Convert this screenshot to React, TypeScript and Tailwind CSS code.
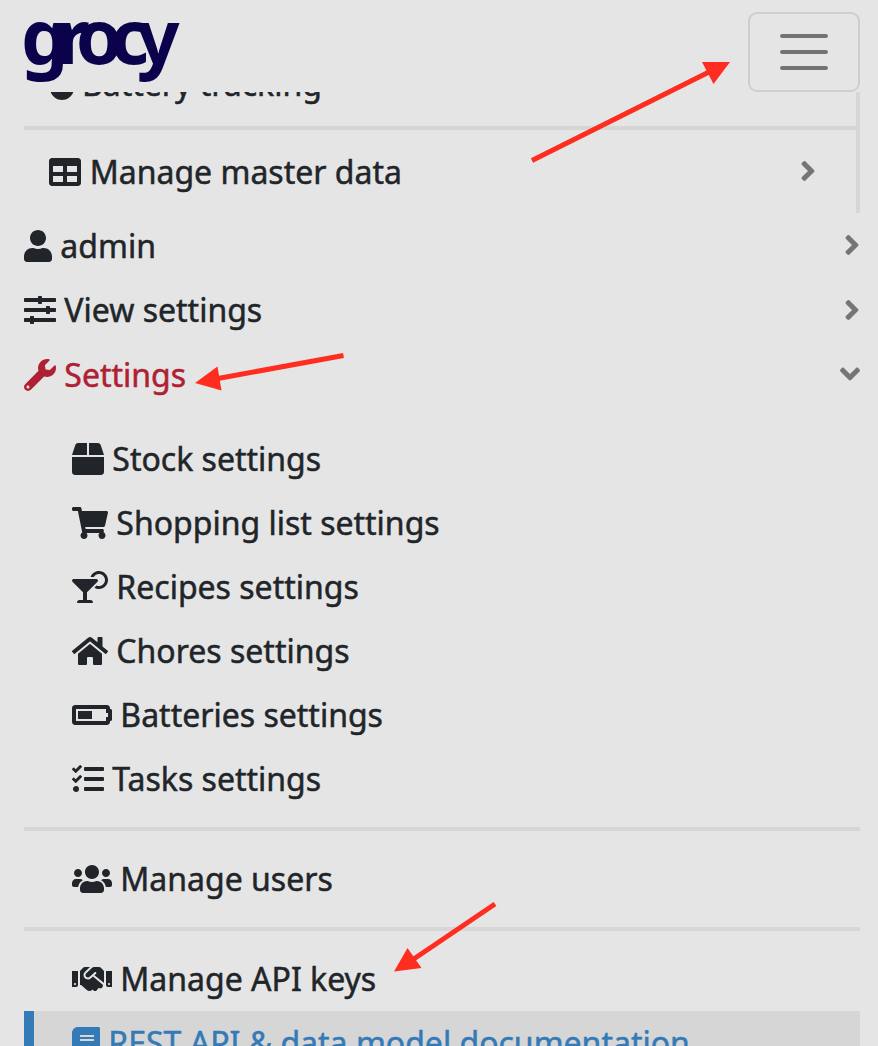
import type { ReactNode } from "react";
import type { IconType } from "react-icons";
import {
  FaAngleDown,
  FaAngleRight,
  FaBatteryHalf,
  FaBook,
  FaBox,
  FaCocktail,
  FaFire,
  FaHandshake,
  FaHome,
  FaShoppingCart,
  FaSlidersH,
  FaTable,
  FaTasks,
  FaUser,
  FaUsers,
  FaWrench,
} from "react-icons/fa";

type RowProps = {
  icon: IconType;
  iconWidth?: string;
  children: ReactNode;
  className?: string;
  chevron?: ReactNode;
};

function Row({ icon: Icon, iconWidth = "w-8", children, className = "", chevron }: RowProps) {
  return (
    <div className={`flex h-16 shrink-0 justify-between whitespace-nowrap leading-[64px] ${className}`}>
      <div>
        <Icon className={`inline-block h-8 align-[-4px] ${iconWidth}`} /> {children}
      </div>
      {chevron}
    </div>
  );
}

function Right({ className = "mt-[15px]" }: { className?: string }) {
  return <FaAngleRight className={`h-8 w-4 text-[#757575] ${className}`} />;
}

function Divider({ className = "" }: { className?: string }) {
  return <div className={`h-1 shrink-0 bg-[#d6d6d6] ${className}`} />;
}

function Arrows() {
  return (
    <svg className="pointer-events-none absolute inset-0" width="878" height="1046" viewBox="0 0 878 1046" fill="#ff2d1f" stroke="#ff2d1f">
      <path d="M532 160.5L710 71.5M343.5 355.5L218 378.5M495 904L413 959.5" strokeWidth="5" fill="none" />
      <path d="M730 62L702 62L713.5 84ZM195 383L217.5 366.5L221.5 390.5ZM394 971.5L407.5 948L421.5 968Z" stroke="none" />
    </svg>
  );
}

export default function App() {
  return (
    <div className="relative flex h-[1046px] w-[878px] flex-col overflow-hidden bg-[#e5e5e5] font-['Noto_Sans',sans-serif] text-[32px] text-[#212529] [-webkit-text-stroke:0.5px_currentColor]">
      <header className="flex h-[92px] shrink-0 items-start justify-between pl-[21px] pr-[18px] pt-3">
        <div className="-mt-[16px] text-[75px] font-bold leading-[78px] tracking-[-12.3px] text-[#0b024c] [-webkit-text-stroke:0px]">
          grocy
        </div>
        <button className="flex h-20 w-28 items-center justify-center rounded-[9px] border-2 border-[#cecece]">
          <svg width="48" height="36" viewBox="0 0 48 36" stroke="#737373" strokeWidth="4" strokeLinecap="round">
            <path d="M2 2H46M2 18H46M2 34H46" />
          </svg>
        </button>
      </header>

      <nav className="flex min-h-0 flex-1 flex-col pl-6 pr-[18px]">
        <section className="flex h-[121px] shrink-0 flex-col overflow-hidden border-r-4 border-[#d6d6d6]">
          <Row icon={FaFire} iconWidth="w-6" className="-mt-10 pl-[25.6px]">Battery tracking</Row>
          <Divider className="mt-[10px]" />
          <Row icon={FaTable} className="mt-[10px] pl-[25.4px] pr-[40px]" chevron={<Right />}>
            Manage master data
          </Row>
        </section>

        <Row icon={FaUser} iconWidth="w-7" className="mt-px" chevron={<Right />}>admin</Row>
        <Row icon={FaSlidersH} chevron={<Right className="mt-4" />}>View settings</Row>
        <Row
          icon={FaWrench}
          className="mt-px text-[#b02033]"
          chevron={<FaAngleDown className="mt-[15px] h-8 w-5 text-[#757575]" />}
        >
          Settings
        </Row>

        <div className="mt-5 flex flex-col">
          <Row icon={FaBox} className="pl-12">Stock settings</Row>
          <Row icon={FaShoppingCart} iconWidth="w-9" className="pl-12">Shopping list settings</Row>
          <Row icon={FaCocktail} iconWidth="w-9" className="pl-12">Recipes settings</Row>
          <Row icon={FaHome} iconWidth="w-9" className="pl-12">Chores settings</Row>
          <Row icon={FaBatteryHalf} iconWidth="w-10" className="pl-12">Batteries settings</Row>
          <Row icon={FaTasks} className="pl-12">Tasks settings</Row>
          <Divider className="my-4" />
          <Row icon={FaUsers} iconWidth="w-10" className="pl-12">Manage users</Row>
          <Divider className="my-4" />
          <Row icon={FaHandshake} iconWidth="w-10" className="pl-12">Manage API keys</Row>
          <Row icon={FaBook} iconWidth="w-7" className="border-l-[10px] border-[#337ab7] bg-[#d6d6d6] pl-[38px] text-[#337ab7]">
            REST API &amp; data model documentation
          </Row>
        </div>
      </nav>
      <Arrows />
    </div>
  );
}
